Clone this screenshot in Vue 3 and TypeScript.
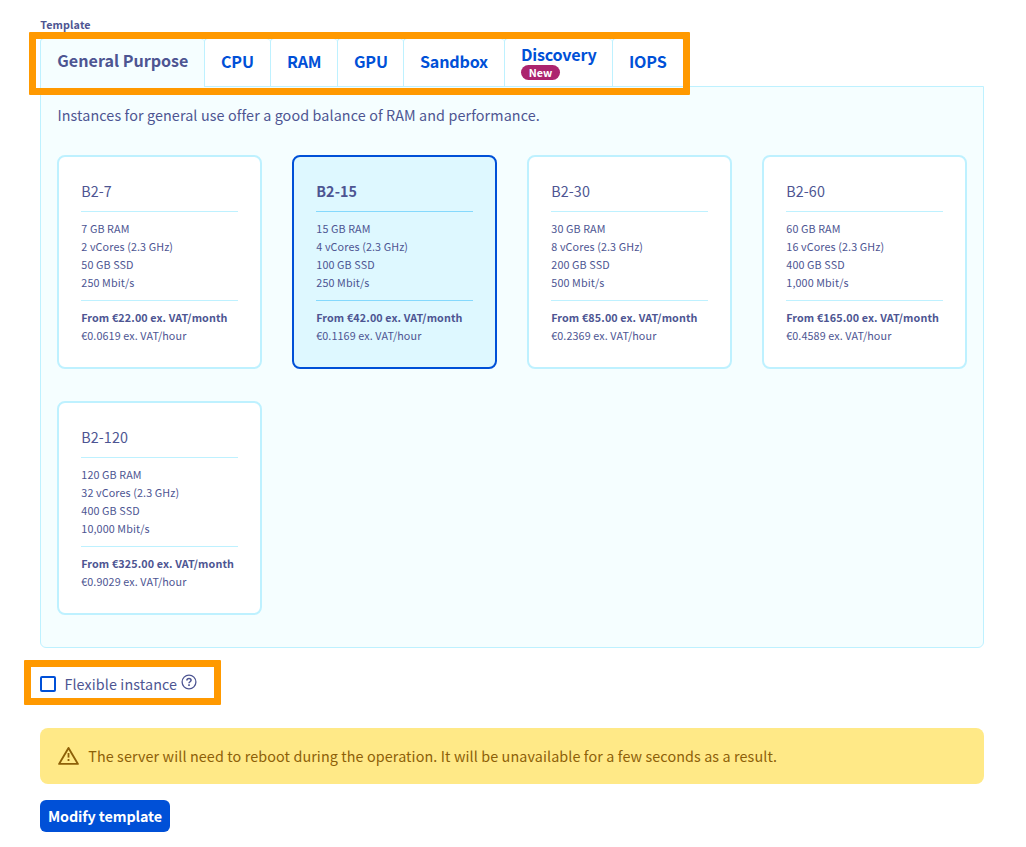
<script setup lang="ts">
import { ref } from 'vue'

interface Tab {
  label: string
  width: number
  isNew?: boolean
}

interface Flavor {
  name: string
  specs: string[]
  monthly: string
  hourly: string
}

const tabs: Tab[] = [
  { label: 'General Purpose', width: 164 },
  { label: 'CPU', width: 66 },
  { label: 'RAM', width: 67 },
  { label: 'GPU', width: 66 },
  { label: 'Sandbox', width: 101 },
  { label: 'Discovery', width: 108, isNew: true },
  { label: 'IOPS', width: 72 },
]

const flavors: Flavor[] = [
  { name: 'B2-7', specs: ['7 GB RAM', '2 vCores (2.3 GHz)', '50 GB SSD', '250 Mbit/s'], monthly: '22.00', hourly: '0.0619' },
  { name: 'B2-15', specs: ['15 GB RAM', '4 vCores (2.3 GHz)', '100 GB SSD', '250 Mbit/s'], monthly: '42.00', hourly: '0.1169' },
  { name: 'B2-30', specs: ['30 GB RAM', '8 vCores (2.3 GHz)', '200 GB SSD', '500 Mbit/s'], monthly: '85.00', hourly: '0.2369' },
  { name: 'B2-60', specs: ['60 GB RAM', '16 vCores (2.3 GHz)', '400 GB SSD', '1,000 Mbit/s'], monthly: '165.00', hourly: '0.4589' },
  { name: 'B2-120', specs: ['120 GB RAM', '32 vCores (2.3 GHz)', '400 GB SSD', '10,000 Mbit/s'], monthly: '325.00', hourly: '0.9029' },
]

const activeTab = ref('General Purpose')
const selected = ref('B2-15')
const flexible = ref(false)
</script>

<template>
  <main class="page">
    <div class="field-label">Template</div>

    <div class="tabs-wrap">
      <nav class="tabs">
        <button
          v-for="tab in tabs"
          :key="tab.label"
          class="tab"
          :class="{ active: tab.label === activeTab }"
          :style="{ width: tab.width + 'px' }"
          @click="activeTab = tab.label"
        >
          <span class="tab-label">{{ tab.label }}</span>
          <span v-if="tab.isNew" class="badge">New</span>
        </button>
      </nav>
      <div class="highlight highlight-tabs"></div>
    </div>

    <section class="panel">
      <p class="intro">Instances for general use offer a good balance of RAM and performance.</p>
      <div class="grid">
        <article
          v-for="f in flavors"
          :key="f.name"
          class="card"
          :class="{ selected: f.name === selected }"
          @click="selected = f.name"
        >
          <h3 class="card-title">{{ f.name }}</h3>
          <ul class="specs">
            <li v-for="s in f.specs" :key="s">{{ s }}</li>
          </ul>
          <div class="month">From €{{ f.monthly }} ex. VAT/month</div>
          <div class="hour">€{{ f.hourly }} ex. VAT/hour</div>
        </article>
      </div>
    </section>

    <div class="flex-row">
      <span class="checkbox" role="checkbox" :aria-checked="flexible" @click="flexible = !flexible"></span>
      <span class="flex-label">Flexible instance</span>
      <svg class="help" viewBox="0 0 16 16" width="16" height="16" fill="none" stroke="currentColor">
        <circle cx="8" cy="8" r="6.9" stroke-width="1.3" />
        <path d="M5.9 6.5C5.9 5.2 6.8 4.5 8 4.5s2.1.7 2.1 1.8c0 1.4-2.1 1.5-2.1 3" stroke-width="1.5" />
        <path d="M8 10.3v1.6" stroke-width="1.6" />
      </svg>
      <div class="highlight highlight-flex"></div>
    </div>

    <div class="alert">
      <svg class="warn" viewBox="0 0 22 20" width="22" height="20" fill="none" stroke="currentColor">
        <path d="M11.5 1.9 20.9 17.9H2.1Z" stroke-width="1.9" stroke-linejoin="round" />
        <path d="M11.5 7v4.6" stroke-width="1.8" />
        <path d="M11.5 13v2" stroke-width="1.8" />
      </svg>
      <span class="alert-text">The server will need to reboot during the operation. It will be unavailable for a few seconds as a result.</span>
    </div>

    <button class="submit"><span>Modify template</span></button>
  </main>
</template>

<style>
body {
  margin: 0;
  background: #fff;
}
</style>

<style scoped>
.page {
  box-sizing: border-box;
  width: 1026px;
  height: 847px;
  padding: 16px 42px 0 40px;
  overflow: hidden;
  color: #4d5592;
  font-family: "Noto Sans CJK SC", "Noto Sans", sans-serif;
  font-size: 14.33px;
  letter-spacing: 0.115px;
  line-height: 24px;
  white-space: nowrap;
}
button {
  font-family: inherit;
  cursor: pointer;
}
.field-label {
  height: 22px;
  padding-left: 0.3px;
  font-size: 10.75px;
  font-weight: 700;
  line-height: 18px;
}
.tabs-wrap {
  position: relative;
  height: 48px;
}
.tabs {
  display: flex;
  height: 48px;
}
.tab {
  box-sizing: border-box;
  display: flex;
  flex-direction: column;
  align-items: flex-start;
  justify-content: center;
  height: 48px;
  padding: 0 0 3px 16px;
  border: 1px solid #bef1ff;
  border-width: 1px 0 0 1px;
  border-radius: 4px 4px 0 0;
  background: #fff;
  color: #0050d7;
  font-size: 16.12px;
  font-weight: 700;
  letter-spacing: -0.2px;
  line-height: 22px;
}
.tab.active {
  height: 49px;
  padding: 0 0 6px 16.3px;
  background: #f5feff;
  color: #4d5592;
  letter-spacing: 0;
}
.tab-label {
  display: block;
}
.badge {
  box-sizing: border-box;
  width: 39px;
  height: 15px;
  margin: 0 0 -1px;
  border-radius: 8px;
  background: #ac246f;
  color: #fff;
  font-size: 10.75px;
  letter-spacing: 0;
  line-height: 15px;
  text-align: center;
}
.highlight {
  position: absolute;
  box-sizing: border-box;
  border: 7px solid #ff9900;
  border-radius: 1px;
  pointer-events: none;
}
.highlight-tabs {
  left: -11px;
  top: -6px;
  width: 661px;
  height: 63px;
}
.panel {
  box-sizing: border-box;
  height: 562px;
  padding: 16px;
  border: 1px solid #bef1ff;
  border-radius: 0 0 6px 6px;
  background: #f5feff;
}
.intro {
  margin: 0 0 28px;
  padding-left: 0.4px;
}
.grid {
  display: grid;
  grid-template-columns: repeat(4, 205px);
  gap: 32px 30px;
}
.card {
  box-sizing: border-box;
  height: 214px;
  padding: 22px;
  border: 2px solid #bef1ff;
  border-radius: 8px;
  background: #fff;
  font-size: 10.75px;
  line-height: 18px;
  cursor: pointer;
}
.card-title {
  margin: 0;
  padding: 0 0 8px 0.2px;
  border-bottom: 1px solid #bef1ff;
  font-size: 14.33px;
  font-weight: 400;
  line-height: 24px;
}
.specs {
  margin: 0 0 8px;
  padding: 8px 0 8px 0.3px;
  border-bottom: 1px solid #bef1ff;
  list-style: none;
}
.month,
.hour {
  padding-left: 0.2px;
}
.month {
  font-weight: 700;
}
.card.selected {
  border-color: #0050d7;
  background: #def8ff;
}
.selected .card-title {
  font-weight: 700;
}
.selected .card-title,
.selected .specs {
  border-color: #85d9fd;
}
.flex-row {
  position: relative;
  display: flex;
  align-items: center;
  height: 24px;
  margin-top: 24px;
}
.checkbox {
  box-sizing: border-box;
  width: 16px;
  height: 16px;
  margin-right: 8.4px;
  border: 2px solid #0050d7;
  border-radius: 2px;
}
.flex-label {
  width: 112.6px;
}
.help {
  margin: -4px 0 0 4px;
}
.highlight-flex {
  left: -16px;
  top: -12px;
  width: 197px;
  height: 45px;
}
.alert {
  display: flex;
  align-items: center;
  height: 56px;
  margin-top: 32px;
  padding-left: 17px;
  border-radius: 8px;
  background: #ffe987;
  color: #8d6008;
}
.warn {
  margin-right: 9.2px;
}
.submit {
  display: block;
  width: 130px;
  height: 32px;
  margin-top: 16px;
  padding: 0;
  border: 0;
  border-radius: 6px;
  background: #0050d7;
  color: #fff;
  font-size: 14.33px;
  font-weight: 700;
  letter-spacing: -0.1px;
  line-height: 32px;
}
</style>
